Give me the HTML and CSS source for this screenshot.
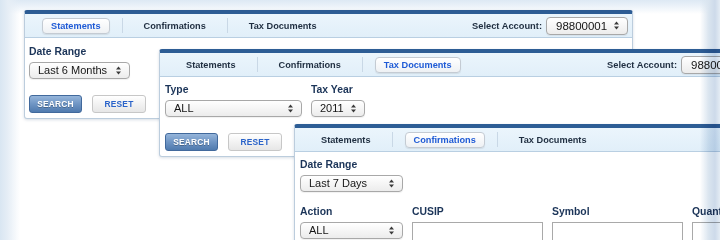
FILE: index.html
```html
<!DOCTYPE html>
<html lang="en">
<head>
    <meta charset="UTF-8">
    <title>Account Documents</title>
    <link rel="stylesheet" href="styles.css">
</head>
<body>
    <div class="stage">

        <!-- statements window -->
        <section class="panel panel-statements">
            <nav class="tabs">
                <span class="tab active">Statements</span>
                <span class="sep"></span>
                <span class="tab">Confirmations</span>
                <span class="sep"></span>
                <span class="tab">Tax Documents</span>
                <div class="account">
                    <span class="account-label">Select Account:</span>
                    <div class="select select-account">98800001<svg class="arrows" viewBox="0 0 5 9"><path d="M0 3.6L2.5 0.6 5 3.6Z"/><path d="M0 5.4L2.5 8.4 5 5.4Z"/></svg></div>
                </div>
            </nav>
            <div class="panel-body">
                <div class="field">
                    <label>Date Range</label>
                    <div class="select w-range">Last 6 Months<svg class="arrows" viewBox="0 0 5 9"><path d="M0 3.6L2.5 0.6 5 3.6Z"/><path d="M0 5.4L2.5 8.4 5 5.4Z"/></svg></div>
                </div>
                <div class="actions">
                    <button class="btn btn-search">SEARCH</button>
                    <button class="btn btn-reset">RESET</button>
                </div>
            </div>
        </section>

        <!-- tax documents window -->
        <section class="panel panel-tax">
            <nav class="tabs">
                <span class="tab">Statements</span>
                <span class="sep"></span>
                <span class="tab">Confirmations</span>
                <span class="sep"></span>
                <span class="tab active">Tax Documents</span>
                <div class="account">
                    <span class="account-label">Select Account:</span>
                    <div class="select select-account">98800001<svg class="arrows" viewBox="0 0 5 9"><path d="M0 3.6L2.5 0.6 5 3.6Z"/><path d="M0 5.4L2.5 8.4 5 5.4Z"/></svg></div>
                </div>
            </nav>
            <div class="panel-body">
                <div class="row">
                    <div class="field">
                        <label>Type</label>
                        <div class="select w-type">ALL<svg class="arrows" viewBox="0 0 5 9"><path d="M0 3.6L2.5 0.6 5 3.6Z"/><path d="M0 5.4L2.5 8.4 5 5.4Z"/></svg></div>
                    </div>
                    <div class="field">
                        <label>Tax Year</label>
                        <div class="select w-year">2011<svg class="arrows" viewBox="0 0 5 9"><path d="M0 3.6L2.5 0.6 5 3.6Z"/><path d="M0 5.4L2.5 8.4 5 5.4Z"/></svg></div>
                    </div>
                </div>
                <div class="actions">
                    <button class="btn btn-search">SEARCH</button>
                    <button class="btn btn-reset">RESET</button>
                </div>
            </div>
        </section>

        <!-- confirmations window -->
        <section class="panel panel-confirm">
            <nav class="tabs">
                <span class="tab">Statements</span>
                <span class="sep"></span>
                <span class="tab active">Confirmations</span>
                <span class="sep"></span>
                <span class="tab">Tax Documents</span>
            </nav>
            <div class="panel-body">
                <div class="field">
                    <label>Date Range</label>
                    <div class="select w-days">Last 7 Days<svg class="arrows" viewBox="0 0 5 9"><path d="M0 3.6L2.5 0.6 5 3.6Z"/><path d="M0 5.4L2.5 8.4 5 5.4Z"/></svg></div>
                </div>
                <div class="row row-gap">
                    <div class="field">
                        <label>Action</label>
                        <div class="select w-days">ALL<svg class="arrows" viewBox="0 0 5 9"><path d="M0 3.6L2.5 0.6 5 3.6Z"/><path d="M0 5.4L2.5 8.4 5 5.4Z"/></svg></div>
                    </div>
                    <div class="field">
                        <label>CUSIP</label>
                        <input type="text" class="text-input">
                    </div>
                    <div class="field">
                        <label>Symbol</label>
                        <input type="text" class="text-input">
                    </div>
                    <div class="field">
                        <label>Quantity</label>
                        <input type="text" class="text-input">
                    </div>
                </div>
            </div>
        </section>

        <div class="edge-fade"></div>
    </div>
</body>
</html>
```

FILE: styles.css
```css
body {
    margin: 0;
    font-family: "Liberation Sans", Arial, sans-serif;
    background-color: #ffffff;
}

.stage {
    position: relative;
    width: 720px;
    height: 240px;
    overflow: hidden;
}

/* windows */
.panel {
    position: absolute;
    width: 607px;
    background-color: #ffffff;
    border: 1px solid #bccddd;
    border-top: 4px solid #2d5d95;
    border-radius: 3px;
    box-shadow: 0 1px 3px rgba(40, 70, 110, 0.18);
}

.panel-statements {
    left: 24px;
    top: 10px;
}

.panel-tax {
    left: 159px;
    top: 49px;
}

.panel-confirm {
    left: 294px;
    top: 124px;
    height: 140px;
}

.tabs {
    display: flex;
    align-items: center;
    height: 23px;
    padding: 0 4px 0 17px;
    background: linear-gradient(#ebf5fc, #e1eff9);
    border-bottom: 1px solid #b9cfe2;
}

.tab {
    padding: 2px 9px;
    font-size: 9.2px;
    font-weight: bold;
    color: #1f2e40;
    line-height: 10px;
}

.tab.active {
    padding: 2px 8px 2px 8px;
    height: 10px;
    line-height: 10px;
    border: 1px solid #c4cbd3;
    border-radius: 4px;
    background: linear-gradient(#ffffff, #eef1f4);
    box-shadow: 0 1px 1px rgba(0, 0, 0, 0.08);
    color: #1f5bd6;
}

.sep {
    width: 1px;
    height: 15px;
    margin: 0 12px;
    background-color: #c9d8e6;
}

.account {
    display: flex;
    align-items: center;
    gap: 4px;
    margin-left: auto;
}

.account-label {
    font-size: 9.3px;
    font-weight: bold;
    color: #1f2e40;
}

.panel-body {
    padding: 8px 4px 5px;
}

.panel-tax .panel-body,
.panel-confirm .panel-body {
    padding: 7px 5px 5px;
}

.row {
    display: flex;
    gap: 9px;
}

.row-gap {
    margin-top: 14px;
}

.field label {
    display: block;
    margin-bottom: 4px;
    font-size: 10.4px;
    line-height: 12px;
    font-weight: bold;
    color: #1b3458;
}

/* fake select boxes */
.select {
    position: relative;
    box-sizing: border-box;
    height: 17px;
    padding-left: 8px;
    font-size: 11px;
    line-height: 15px;
    color: #151515;
    border: 1px solid #a8a8a8;
    border-radius: 4px;
    background: linear-gradient(#ffffff, #ececec);
    box-shadow: 0 1px 1px rgba(0, 0, 0, 0.06);
}

.arrows {
    position: absolute;
    right: 8px;
    top: 3px;
    width: 5px;
    height: 9px;
    fill: #3a3a3a;
}

.select-account {
    width: 82px;
    height: 18px;
    padding-left: 9px;
    font-size: 11.5px;
    line-height: 16px;
}

.w-range {
    width: 101px;
}

.w-type {
    width: 137px;
}

.w-year {
    width: 54px;
}

.w-days {
    width: 103px;
}

.text-input {
    display: block;
    box-sizing: border-box;
    width: 131px;
    height: 30px;
    margin: 0;
    border: 1px solid #a9a9a9;
    background-color: #ffffff;
}

.actions {
    display: flex;
    gap: 10px;
    margin-top: 16px;
}

.btn {
    box-sizing: border-box;
    width: 53px;
    height: 18px;
    padding: 0;
    font-family: "Liberation Sans", Arial, sans-serif;
    font-size: 8.4px;
    font-weight: bold;
    letter-spacing: 0.2px;
    border-radius: 3px;
}

.btn-search {
    color: #ffffff;
    border: 1px solid #41699c;
    background: linear-gradient(#95b5da, #6f95c4 50%, #4f7aae);
    text-shadow: 0 1px 0 rgba(0, 0, 0, 0.25);
}

.btn-reset {
    width: 54px;
    color: #2a63c9;
    border: 1px solid #c7c7c7;
    background: linear-gradient(#ffffff, #e6e6e6);
}

/* soft blue vignette around the picture, tints without hiding text */
.edge-fade {
    position: absolute;
    inset: 0;
    pointer-events: none;
    mix-blend-mode: multiply;
    background:
        linear-gradient(to left, #e4ecf4 0, #cddaea 5px, #d9e4ef 11px, rgba(255, 255, 255, 0) 20px),
        linear-gradient(to right, #d9e6f2 0, #e6eef6 8px, rgba(255, 255, 255, 0) 20px),
        linear-gradient(to bottom, #dde9f4 0, #ebf2f9 6px, rgba(255, 255, 255, 0) 14px);
}
```
